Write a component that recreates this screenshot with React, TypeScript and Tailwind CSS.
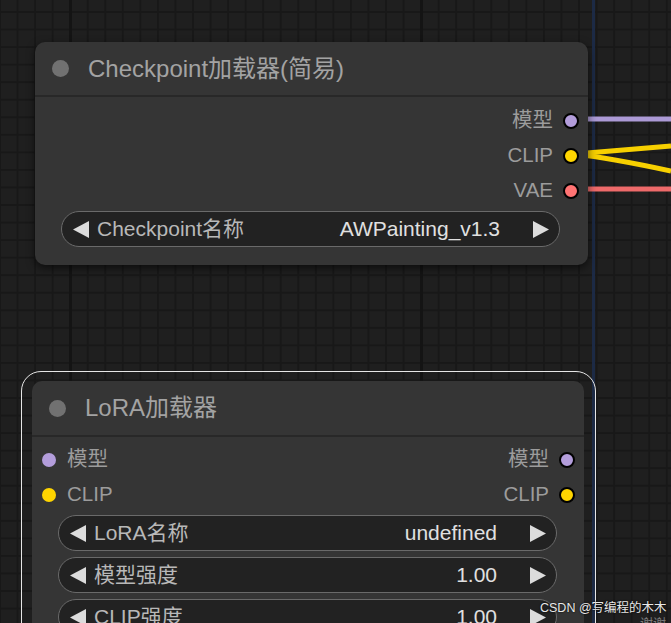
import React from 'react';

type SlotColor = 'model' | 'clip' | 'vae';

const dotColor: Record<SlotColor, string> = {
  model: 'bg-[#b39ddb]',
  clip: 'bg-[#ffd500]',
  vae: 'bg-[#ff7373]',
};

function Dot({ type, ring }: { type: SlotColor; ring?: boolean }) {
  return (
    <span
      className={
        'block shrink-0 rounded-full ' +
        dotColor[type] +
        (ring ? ' h-[16px] w-[16px] border-2 border-black' : ' h-[14px] w-[14px]')
      }
    />
  );
}

function ArrowLeft() {
  return (
    <svg width="16" height="17" viewBox="0 0 16 17" className="shrink-0">
      <polygon points="16,0 16,17 0,8.5" fill="#dcdcdc" />
    </svg>
  );
}

function ArrowRight() {
  return (
    <svg width="16" height="17" viewBox="0 0 16 17" className="shrink-0">
      <polygon points="0,0 0,17 16,8.5" fill="#dcdcdc" />
    </svg>
  );
}

function Combo({ label, value }: { label: string; value: string }) {
  return (
    <div className="flex h-[36px] items-center rounded-full border-[1.5px] border-[#6a6a6a] bg-[#222222] pl-[11px] pr-[10px] text-[21px]">
      <ArrowLeft />
      <span className="ml-[8px] text-[#b8b8b8]">{label}</span>
      <span className="ml-auto mr-[33px] text-[#e0e0e0]">{value}</span>
      <ArrowRight />
    </div>
  );
}

function OutRow({ label, type }: { label: string; type: SlotColor }) {
  return (
    <div className="flex h-[35px] items-center justify-end gap-[10px]">
      <span className="text-[20.5px] text-[#9c9c9c]">{label}</span>
      <Dot type={type} ring />
    </div>
  );
}

function NodeTitle({ title, h }: { title: string; h: string }) {
  return (
    <div className={'flex items-center border-b-2 border-[#282828] pl-[17px] ' + h}>
      <span className="block h-[17px] w-[17px] rounded-full bg-[#717171]" />
      <span className="ml-[19px] text-[24px] text-[#a3a3a3]">{title}</span>
    </div>
  );
}

export default function App() {
  return (
    <div className="relative h-[623px] w-[671px] overflow-hidden bg-[#1f1f1f] bg-[linear-gradient(to_right,#141414_3px,transparent_3px),linear-gradient(to_right,#181818_2px,transparent_2px),linear-gradient(to_bottom,#181818_2px,transparent_2px)] bg-[size:351px_351px,17.55px_17.55px,17.55px_17.55px] bg-[position:69px_0px,-1px_0px,0px_11px] font-['Liberation_Sans','Noto_Sans_CJK_SC',sans-serif]">
      {/* selection guide */}
      <div className="absolute left-[592px] top-0 h-full w-[3px] bg-[#1c2a45]" />

      {/* links */}
      <svg className="absolute left-0 top-0" width="671" height="623">
        <path d="M575 119 L671 119" stroke="#ac9ad6" strokeWidth="5" fill="none" />
        <path d="M575 154 Q610 151 671 146" stroke="#f7d000" strokeWidth="5" fill="none" />
        <path d="M575 154 Q610 158 671 171" stroke="#f7d000" strokeWidth="5" fill="none" />
        <path d="M575 189 L671 189" stroke="#ee6a6a" strokeWidth="5" fill="none" />
      </svg>

      {/* Checkpoint loader */}
      <div className="absolute left-[35px] top-[42px] w-[553px] rounded-[10px] bg-[#353535] shadow-[0_3px_8px_rgba(0,0,0,0.6)]">
        <NodeTitle title="Checkpoint加载器(简易)" h="h-[55px]" />
        <div className="pb-[18px] pl-[26px] pr-[9px] pt-[6px]">
          <OutRow label="模型" type="model" />
          <OutRow label="CLIP" type="clip" />
          <OutRow label="VAE" type="vae" />
          <div className="mr-[19px] mt-[3px]">
            <Combo label="Checkpoint名称" value="AWPainting_v1.3" />
          </div>
        </div>
      </div>

      {/* selection outline */}
      <div className="absolute left-[21px] top-[371px] h-[320px] w-[575px] rounded-[20px] border-[1.5px] border-[#e6e6e6]" />

      {/* LoRA loader */}
      <div className="absolute left-[32px] top-[381px] h-[300px] w-[552px] rounded-[10px] bg-[#353535]">
        <NodeTitle title="LoRA加载器" h="h-[56px]" />
        <div className="pt-[5px]">
          {[
            { label: '模型', type: 'model' as SlotColor },
            { label: 'CLIP', type: 'clip' as SlotColor },
          ].map((s) => (
            <div key={s.label} className="flex h-[35px] items-center pl-[10px] pr-[9px]">
              <Dot type={s.type} />
              <span className="ml-[11px] text-[20.5px] text-[#9c9c9c]">{s.label}</span>
              <span className="ml-auto mr-[10px] text-[20.5px] text-[#9c9c9c]">{s.label}</span>
              <Dot type={s.type} ring />
            </div>
          ))}
          <div className="ml-[26px] mr-[27px] mt-[3px] flex flex-col gap-[6px]">
            <Combo label="LoRA名称" value="undefined" />
            <Combo label="模型强度" value="1.00" />
            <Combo label="CLIP强度" value="1.00" />
          </div>
        </div>
      </div>

      {/* watermark */}
      <div className="absolute left-[540px] top-[599px] text-[12.5px] text-[#e8e8e8] [text-shadow:0_0_2px_#000]">
        CSDN @写编程的木木
      </div>
      <div className="absolute left-[640px] top-[614px] text-[13px] text-[#7a7a7a]">谢谢</div>
    </div>
  );
}
